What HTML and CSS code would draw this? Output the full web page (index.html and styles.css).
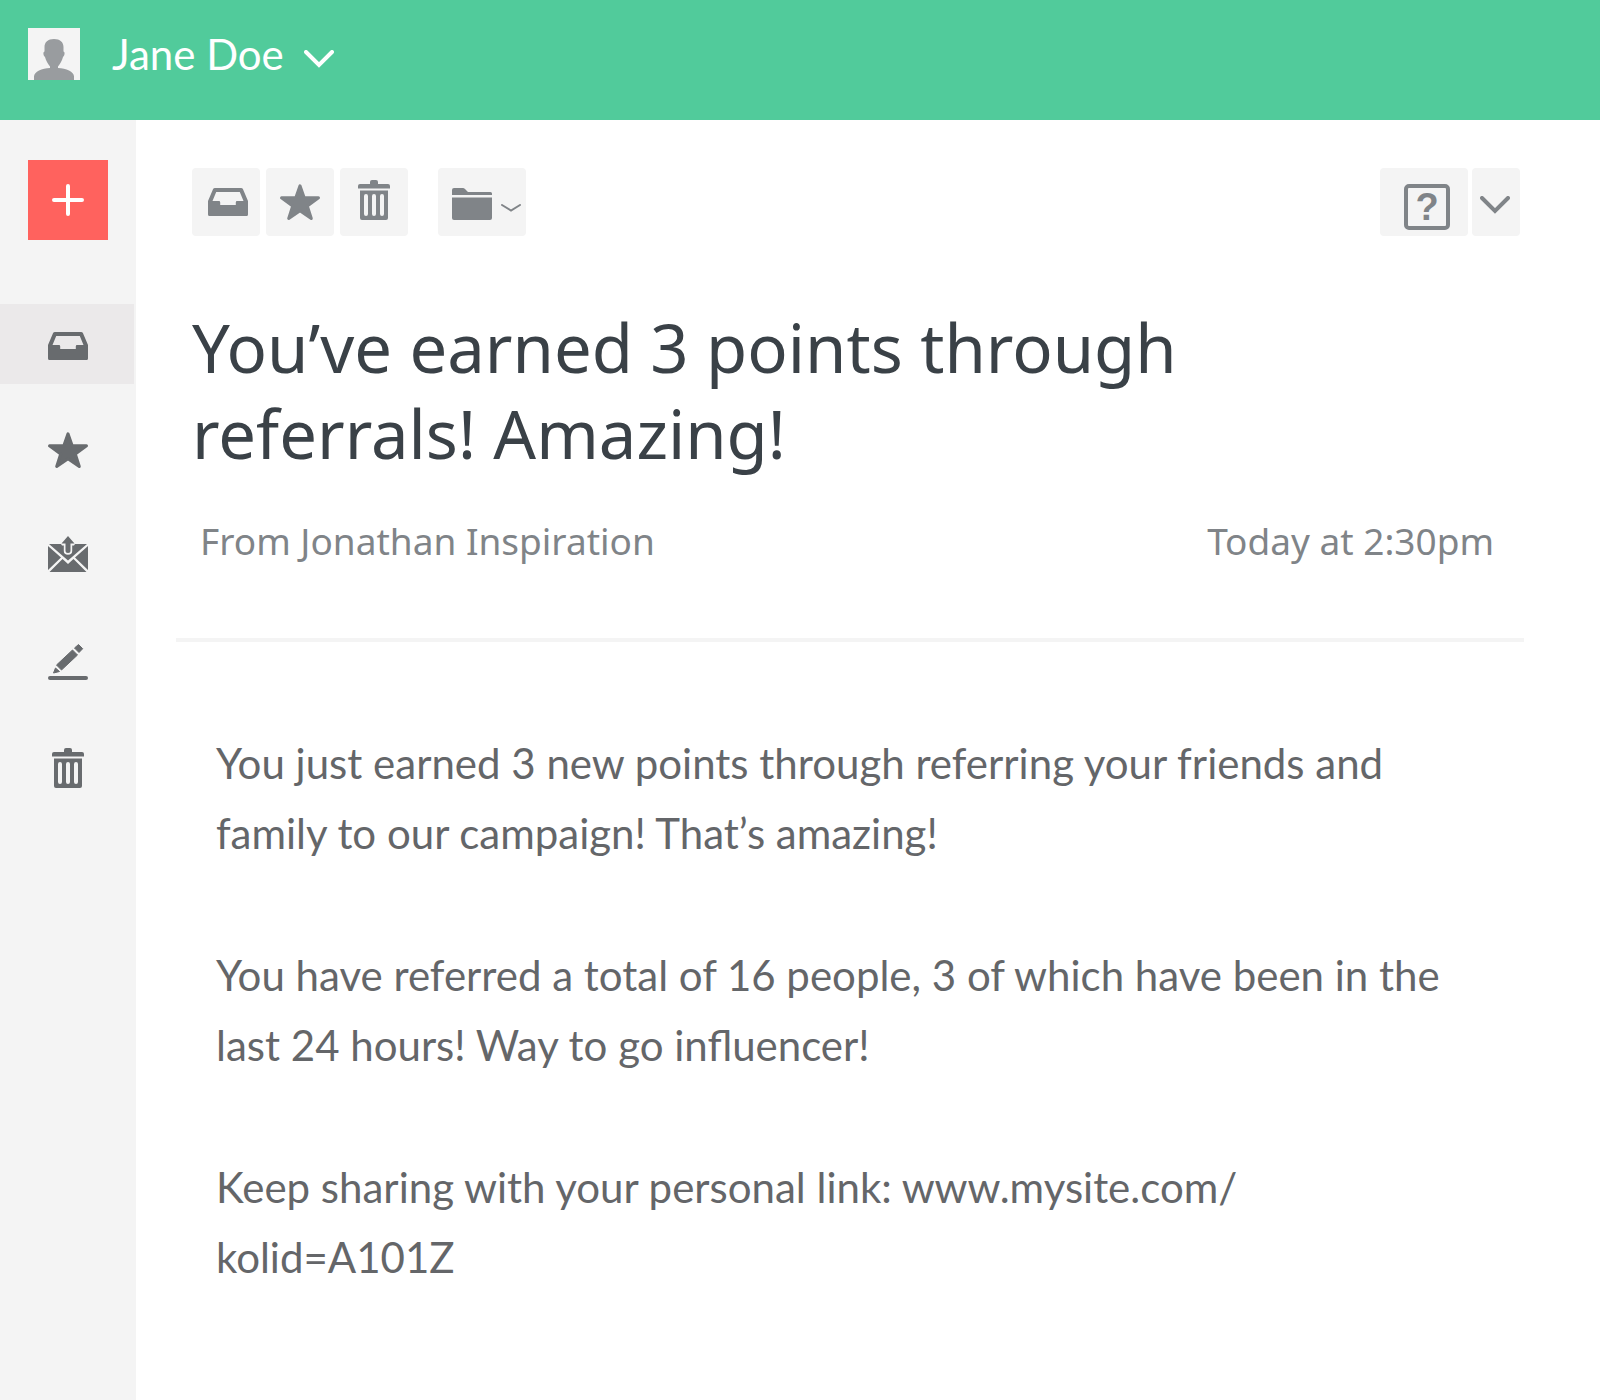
FILE: index.html
```
<!DOCTYPE html>
<html lang="en">
<head>
    <meta charset="UTF-8">
    <meta name="viewport" content="width=device-width, initial-scale=1.0">
    <title>Inbox</title>
    <link rel="stylesheet" href="styles.css">
</head>
<body>
    <!-- shared icons -->
    <svg class="sprite" aria-hidden="true">
        <defs>
            <g id="inbox">
                <path fill-rule="evenodd" d="M7 8h26q1.500 0 2 1.300L40 21v13.500q0 1.500-1.500 1.500h-37Q0 36 0 34.500V21L5 9.300Q5.500 8 7 8zM8.200 12L4.500 21H11q1.200 0 1.200 1.200V25h15.600v-2.800q0-1.200 1.200-1.200h6.500L31.800 12z"/>
            </g>
            <g id="star">
                <path stroke-width="3" stroke-linejoin="round" d="M20 3.800L24.200 15.800L38.500 15.800L27.300 24L31.300 36.500L20 28.800L8.700 36.500L12.700 24L1.500 15.800L15.800 15.800z"/>
            </g>
            <g id="trash">
                <path d="M16 4V2q0-2 2-2h4q2 0 2 2v2h10q2 0 2 2v2.500H4V6q0-2 2-2z"/>
                <path fill-rule="evenodd" d="M6 10.500h28V38q0 2-2 2H8q-2 0-2-2zM10 16v18a2 2 0 0 0 4 0V16a2 2 0 0 0-4 0zM18 16v18a2 2 0 0 0 4 0V16a2 2 0 0 0-4 0zM26 16v18a2 2 0 0 0 4 0V16a2 2 0 0 0-4 0z"/>
            </g>
        </defs>
    </svg>

    <header class="topbar">
        <svg class="avatar" viewBox="0 0 52 52" aria-hidden="true">
            <path d="M26 11c6 0 9.500 3 9.500 8v4.500c1.500 0 1.500 4-.5 5.500-1 4-3 7-5 9.500v1.500c8 .5 16 3.500 16 8.500v3.500H6V48.500c0-5 8-8 16-8.500v-1.500c-2-2.500-4-5.500-5-9.500-2-1.500-2-5.500-.5-5.500V19c0-5 3.500-8 9.500-8z"/>
        </svg>
        <button class="user" type="button">
            Jane Doe
            <svg class="chevron" viewBox="0 0 30 18" aria-hidden="true"><path d="M2 2l13 13L28 2"/></svg>
        </button>
    </header>

    <div class="layout">
        <nav class="sidebar" aria-label="Mailboxes">
            <button class="compose" type="button" aria-label="Compose">
                <svg viewBox="0 0 32 32" aria-hidden="true"><path d="M16 2v28M2 16h28"/></svg>
            </button>
            <a class="box active" href="#" aria-label="Inbox"><svg class="icon" viewBox="0 0 40 40"><use href="#inbox"/></svg></a>
            <a class="box" href="#" aria-label="Starred"><svg class="icon" viewBox="0 0 40 40"><use href="#star"/></svg></a>
            <a class="box" href="#" aria-label="Sent">
                <svg class="icon" viewBox="0 0 40 40">
                    <path d="M0 10L13 21.500L0 34zM40 10L27 21.500L40 34z"/>
                    <path d="M1.500 36L14.500 23L20 28L25.500 23L38.500 36z"/>
                    <path d="M1 8h12l1 1.500h1.800V15q0 3.800 4.200 3.800t4.200-3.800V9.500H26L27 8h12L20 24.500z"/>
                    <path d="M20 0l6.500 7.500h-4V14.500a2.500 2.500 0 0 1-5 0V7.500h-4z"/>
                </svg>
            </a>
            <a class="box" href="#" aria-label="Drafts">
                <svg class="icon" viewBox="0 0 40 40">
                    <g stroke-width="1" stroke-linejoin="round">
                        <path d="M30.500 2.500l4.200 4.200L31 10.500l-4.500-4.500z"/>
                        <path d="M24.500 8l5 5L13.500 28l-5-5z"/>
                        <path d="M7.500 26l4 3.500-6 1.500z"/>
                    </g>
                    <rect y="34" width="40" height="4" rx="2"/>
                </svg>
            </a>
            <a class="box" href="#" aria-label="Trash"><svg class="icon" viewBox="0 0 40 40"><use href="#trash"/></svg></a>
        </nav>

        <main class="message">
            <div class="toolbar">
                <div class="group">
                    <button class="tool" type="button" aria-label="Archive"><svg class="icon" viewBox="-2 2 40 40"><use href="#inbox"/></svg></button>
                    <button class="tool" type="button" aria-label="Star"><svg class="icon" viewBox="0 0 40 40"><use href="#star"/></svg></button>
                    <button class="tool" type="button" aria-label="Delete"><svg class="icon" viewBox="0 2 40 40"><use href="#trash"/></svg></button>
                </div>
                <button class="tool folder" type="button" aria-label="Move to folder">
                    <svg class="icon" viewBox="0 0 40 40">
                        <path d="M0 13V8q0-2 2-2h9q1 0 2 1l3 3h22.500q1.500 0 1.500 1.500V13z"/>
                        <path d="M0 15.500h40V36q0 2-2 2H2q-2 0-2-2z"/>
                    </svg>
                    <svg class="caret" viewBox="0 0 20 8" aria-hidden="true"><path d="M1 1l9 5.500L19 1"/></svg>
                </button>
                <div class="group end">
                    <button class="tool help" type="button" aria-label="Help">
                        <svg viewBox="0 0 46 46" aria-hidden="true">
                            <rect x="2" y="2" width="42" height="42" rx="3"/>
                            <text x="23" y="36" text-anchor="middle">?</text>
                        </svg>
                    </button>
                    <button class="tool more" type="button" aria-label="More">
                        <svg class="chevron" viewBox="0 0 30 18" aria-hidden="true"><path d="M2 2l13 13L28 2"/></svg>
                    </button>
                </div>
            </div>

            <h1>You’ve earned 3 points through referrals! Amazing!</h1>

            <div class="meta">
                <span>From Jonathan Inspiration</span>
                <time>Today at 2:30pm</time>
            </div>

            <div class="content">
                <p>You just earned 3 new points through referring your friends and family to our campaign! That’s amazing!</p>
                <p>You have referred a total of 16 people, 3 of which have been in the last 24 hours! Way to go influencer!</p>
                <p>Keep sharing with your personal link: www.mysite.com/<wbr>kolid=A101Z</p>
            </div>
        </main>
    </div>
</body>
</html>
```
FILE: styles.css
```
* {
    padding: 0;
    margin: 0;
    box-sizing: border-box;
}

body {
    min-height: 100vh;
    display: flex;
    flex-direction: column;
    font-family: Lato, sans-serif;
    background: #fff;
    color: #646669;
}

button {
    border: none;
    background: none;
    font: inherit;
    color: inherit;
    cursor: pointer;
}

.sprite {
    display: none;
}

.icon {
    width: 40px;
    height: 40px;
    flex: none;
    overflow: visible;
    fill: currentColor;
    stroke: currentColor;
    stroke-width: 0;
}

.chevron {
    width: 30px;
    height: 18px;
    flex: none;
    fill: none;
    stroke: currentColor;
    stroke-width: 4;
    stroke-linecap: round;
}

/* Top bar */

.topbar {
    height: 120px;
    display: flex;
    align-items: flex-start;
    gap: 32px;
    padding: 28px;
    background: #51cb9b;
}

.avatar {
    width: 52px;
    height: 52px;
    background: #f4f4f4;
    fill: #999c9f;
}

.user {
    display: flex;
    align-items: center;
    gap: 20px;
    color: #fff;
    font-size: 42px;
    line-height: 52px;
}

.user .chevron {
    margin-top: 10px;
}

/* Sidebar */

.layout {
    flex: 1;
    display: flex;
}

.sidebar {
    width: 136px;
    flex: none;
    display: flex;
    flex-direction: column;
    gap: 26px;
    padding: 40px 2px 40px 0;
    background: #f4f4f4;
    color: #686b6e;
}

.compose {
    width: 80px;
    height: 80px;
    margin: 0 0 38px 28px;
    background: #ff625e;
}

.compose svg {
    display: block;
    width: 32px;
    height: 32px;
    margin: 0 auto;
    fill: none;
    stroke: #fff;
    stroke-width: 4;
    stroke-linecap: round;
}

.box {
    height: 80px;
    display: flex;
    align-items: center;
    padding-left: 48px;
    color: inherit;
}

.box.active {
    background: #ebe9ea;
}

/* Message */

.message {
    flex: 1;
    padding: 48px 76px 48px 40px;
}

.toolbar {
    display: flex;
    gap: 30px;
    padding: 0 4px 0 16px;
    color: #808488;
}

.group {
    display: flex;
    gap: 6px;
}

.group.end {
    gap: 4px;
    margin-left: auto;
}

.tool {
    width: 68px;
    height: 68px;
    display: flex;
    align-items: center;
    justify-content: center;
    background: #f4f4f4;
    border-radius: 4px;
}

.folder {
    width: 88px;
    gap: 9px;
    padding-left: 8px;
}

.caret {
    width: 20px;
    height: 8px;
    margin-top: 12px;
    fill: none;
    stroke: currentColor;
    stroke-width: 2;
    stroke-linecap: round;
}

.help {
    width: 88px;
    align-items: flex-end;
    padding: 0 0 6px 6px;
}

.help svg {
    width: 46px;
    height: 46px;
    fill: none;
    stroke: currentColor;
    stroke-width: 4;
}

.help text {
    fill: currentColor;
    stroke: none;
    font: bold 38px "Liberation Sans", sans-serif;
}

.more {
    width: 48px;
    padding: 6px 2px 0 0;
}

h1 {
    max-width: 1100px;
    margin-top: 68px;
    padding-left: 16px;
    font: 400 67px/86px "Noto Sans", sans-serif;
    color: #3a4147;
}

.meta {
    display: flex;
    justify-content: space-between;
    margin-top: 14px;
    padding: 24px 30px 70px 24px;
    border-bottom: 4px solid #f4f4f4;
    font: 37px/54px "Noto Sans", sans-serif;
    color: #808488;
}

.content {
    padding: 86px 70px 0 40px;
    font-size: 42px;
    line-height: 70px;
}

.content p {
    margin-bottom: 72px;
}
```
